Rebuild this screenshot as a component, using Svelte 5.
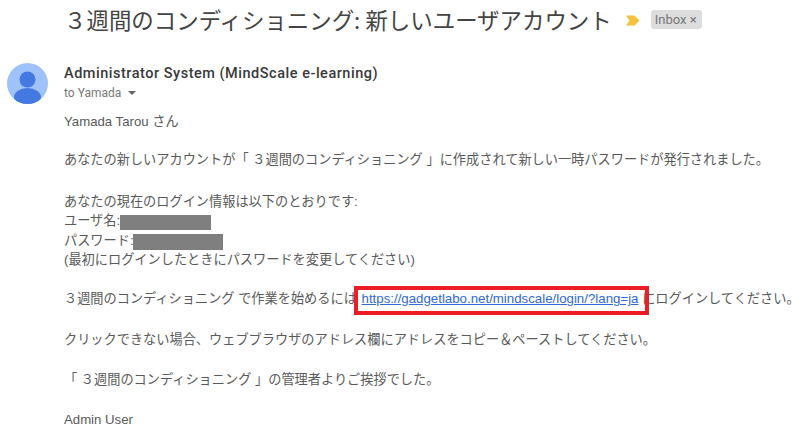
<script>
  const title = '３週間のコンディショニング: 新しいユーザアカウント';
</script>

<div class="page">
  <header class="subject">
    <h1>{title}</h1>
    <svg class="marker" viewBox="0 0 14 11" width="14" height="11" aria-hidden="true"><path d="M0 0.5H8.5L13.5 5.5L8.5 10.5H0L3.5 5.5Z" fill="#f8c13d"/></svg>
    <span class="chip">Inbox <span class="x">×</span></span>
  </header>

  <div class="message">
    <svg class="avatar" viewBox="0 0 41 41" width="41" height="41" aria-hidden="true">
      <defs><clipPath id="c"><circle cx="20.5" cy="20.5" r="20.5"/></clipPath></defs>
      <circle cx="20.5" cy="20.5" r="20.5" fill="#a0c2fa"/>
      <g clip-path="url(#c)" fill="#4479e1">
        <circle cx="20.5" cy="16.5" r="8"/>
        <ellipse cx="20.5" cy="34" rx="13.5" ry="9"/>
      </g>
    </svg>
    <div class="content">
      <div class="sender">Administrator System (MindScale e-learning)</div>
      <div class="to">to Yamada <span class="caret"></span></div>
      <div class="body">
        <p class="greet">Yamada Tarou さん</p>
        <p class="intro">あなたの新しいアカウントが「 ３週間のコンディショニング 」に作成されて新しい一時パスワードが発行されました。</p>
        <p class="cred">あなたの現在のログイン情報は以下のとおりです:<br />
          ユーザ名:<span class="redact r1"></span><br />
          パスワード:<span class="redact r2"></span><br />
          (最初にログインしたときにパスワードを変更してください)</p>
        <p class="start">３週間のコンディショニング で作業を始めるには <a href="#top" class="link">https://gadgetlabo.net/mindscale/login/?lang=ja<span class="box"></span></a> にログインしてください。</p>
        <p class="copy">クリックできない場合、ウェブブラウザのアドレス欄にアドレスをコピー＆ペーストしてください。</p>
        <p class="regards">「 ３週間のコンディショニング 」の管理者よりご挨拶でした。</p>
        <p class="sign">Admin User</p>
      </div>
    </div>
  </div>
</div>

<style>
  :global(body) { margin: 0; background: #fff; overflow: hidden; }
  .page {
    width: 800px; height: 441px; overflow: hidden; box-sizing: border-box;
    padding: 6px 0 0 7px;
    font-family: "Liberation Sans", "Noto Sans CJK JP", sans-serif;
    color: #5a5a5a;
  }
  .subject { display: flex; align-items: center; height: 28px; padding-left: 57px; }
  h1 { margin: 0 0 3px; font-size: 22.45px; font-weight: 400; color: #444; white-space: nowrap; font-family: "Noto Sans CJK JP", sans-serif; line-height: 28px; }
  .marker { margin-left: 14px; flex: none; }
  .chip { margin: 0 0 2px 11px; background: #ddd; color: #777; border-radius: 3px; font-size: 13px; padding: 2px 5px 2px 4px; line-height: 15px; font-family: "Roboto", sans-serif; }
  .message { display: flex; margin-top: 29px; }
  .avatar { flex: none; margin-right: 16px; }
  .content { flex: 1; min-width: 0; margin-top: 2px; }
  .sender { font-family: "Roboto", sans-serif; font-weight: 500; font-size: 14.5px; color: #3a3a3a; line-height: 18px; letter-spacing: 0.52px; white-space: nowrap; }
  .to { font-family: "Roboto", sans-serif; font-size: 12px; color: #777; line-height: 16px; margin-top: 2px; display: flex; align-items: center; gap: 6px; }
  .caret { width: 0; height: 0; border: 4px solid transparent; border-top: 4px solid #666; border-bottom: 0; margin-left: 1px; }
  .body { font-size: 13.2px; line-height: 19.4px; margin-top: 11px; white-space: nowrap; }
  p { margin: 0; }
  .intro { margin-top: 19px; }
  .cred { margin-top: 22px; }
  .start { margin-top: 20px; }
  .copy { margin-top: 21px; }
  .regards { margin-top: 21px; }
  .sign { margin-top: 20px; }
  .redact { display: inline-block; background: #7f7f7f; height: 15px; vertical-align: -5px; }
  .r1 { width: 91px; }
  .r2 { width: 90px; height: 16px; margin-left: -1px; }
  .link { position: relative; color: #2f6ad9; text-decoration: underline; font-size: 13.28px; margin-left: 1px; }
  .box { position: absolute; left: -8px; right: -11px; top: -5px; bottom: -9px; border: 4px solid #ee1c25; }
</style>
